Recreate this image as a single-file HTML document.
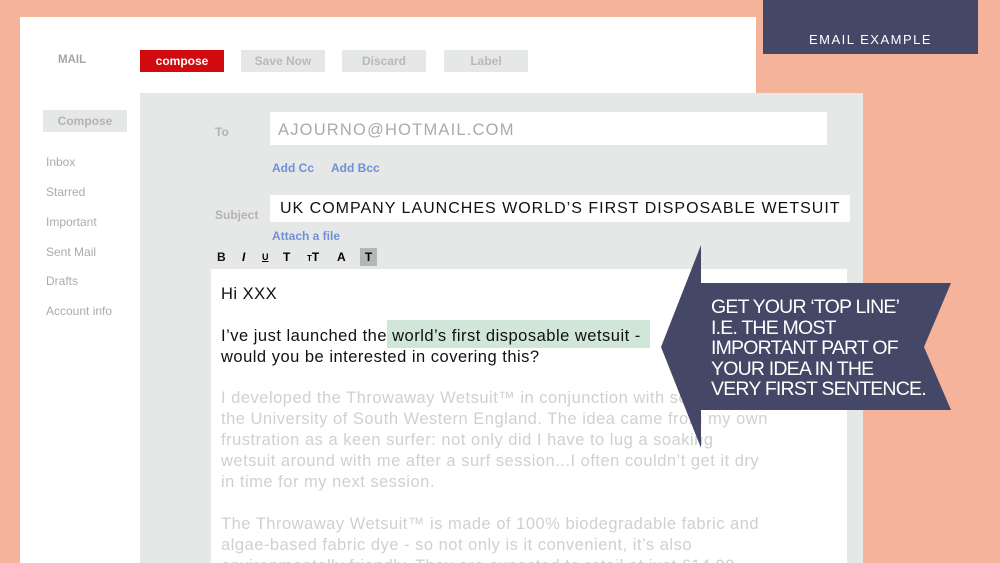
<!DOCTYPE html>
<html><head><style>
*{margin:0;padding:0;box-sizing:border-box}
html,body{width:1000px;height:563px;overflow:hidden}
body{background:#f5b39c;position:relative;font-family:"Liberation Sans",sans-serif}
.a{position:absolute}
.btn{position:absolute;top:50px;height:22px;background:#e6e8e7;color:#b8b8b8;font-weight:bold;font-size:12px;text-align:center;line-height:22px}
.side{position:absolute;left:46px;color:#ababab;font-size:12px}
.lbl{position:absolute;color:#b3b3b3;font-weight:bold;font-size:12px}
.lnk{position:absolute;color:#6f8fd6;font-weight:bold;font-size:12px}
.body{font-size:16.5px;line-height:21px;letter-spacing:0.5px;white-space:nowrap}
</style></head><body>
<div class="a" style="left:20px;top:17px;width:736px;height:546px;background:#fff"></div>
<div class="a" style="left:763px;top:0;width:215px;height:54px;background:#454766;color:#fff;font-size:13px;letter-spacing:1.5px;text-align:center;line-height:80px">EMAIL EXAMPLE</div>
<div class="a" style="left:58px;top:54px;color:#a6a6a6;font-size:11.5px;font-weight:bold">MAIL</div>
<div class="btn" style="left:140px;width:84px;background:#d10a10;color:#fff">compose</div>
<div class="btn" style="left:241px;width:84px">Save Now</div>
<div class="btn" style="left:342px;width:84px">Discard</div>
<div class="btn" style="left:444px;width:84px">Label</div>
<div class="a" style="left:140px;top:93px;width:723px;height:470px;background:#e6e8e7"></div>
<div class="a" style="left:43px;top:110px;width:84px;height:22px;background:#e6e8e7;color:#b3b3b3;font-weight:bold;font-size:12px;text-align:center;line-height:22px">Compose</div>
<div class="side" style="top:155px">Inbox</div>
<div class="side" style="top:185px">Starred</div>
<div class="side" style="top:215px">Important</div>
<div class="side" style="top:245px">Sent Mail</div>
<div class="side" style="top:274px">Drafts</div>
<div class="side" style="top:304px">Account info</div>
<div class="lbl" style="left:215px;top:125px">To</div>
<div class="a" style="left:270px;top:112px;width:557px;height:33px;background:#fff;color:#aaa;font-size:16.5px;letter-spacing:1.2px;padding:9px 0 0 8px">AJOURNO@HOTMAIL.COM</div>
<div class="lnk" style="left:272px;top:161px">Add Cc</div>
<div class="lnk" style="left:331px;top:161px">Add Bcc</div>
<div class="lbl" style="left:215px;top:208px">Subject</div>
<div class="a" style="left:270px;top:195px;width:580px;height:27px;background:#fff;color:#111;font-size:16px;letter-spacing:1px;padding:5px 0 0 10px;white-space:nowrap">UK COMPANY LAUNCHES WORLD’S FIRST DISPOSABLE WETSUIT</div>
<div class="lnk" style="left:272px;top:229px">Attach a file</div>
<div class="a" style="left:217px;top:250px;font-size:12px;font-weight:bold;color:#111">B</div>
<div class="a" style="left:242px;top:250px;font-size:12px;font-weight:bold;font-style:italic">I</div>
<div class="a" style="left:262px;top:252px;font-size:9px;font-weight:bold;text-decoration:underline">U</div>
<div class="a" style="left:283px;top:250px;font-size:12px;font-weight:bold">T</div>
<div class="a" style="left:307px;top:250px;font-size:12px;font-weight:bold"><span style="font-size:8px">T</span>T</div>
<div class="a" style="left:337px;top:250px;font-size:12px;font-weight:bold">A</div>
<div class="a" style="left:360px;top:248px;width:17px;height:18px;background:#b3b7b6;font-size:12px;font-weight:bold;text-align:center;line-height:18px">T</div>
<div class="a" style="left:211px;top:269px;width:636px;height:294px;background:#fff;overflow:hidden">
<div class="a" style="left:176px;top:51px;width:263px;height:28px;background:#cfe6d9"></div>
<div class="a body" style="left:10px;top:15px;color:#111">Hi XXX</div>
<div class="a body" style="left:10px;top:57px;color:#111">I’ve just launched the world’s first disposable wetsuit -<br>would you be interested in covering this?</div>
<div class="a body" style="left:10px;top:119px;color:#d0d0d0">I developed the Throwaway Wetsuit™ in conjunction with scientists at<br>the University of South Western England. The idea came from my own<br>frustration as a keen surfer: not only did I have to lug a soaking<br>wetsuit around with me after a surf session...I often couldn’t get it dry<br>in time for my next session.<br><br>The Throwaway Wetsuit™ is made of 100% biodegradable fabric and<br>algae-based fabric dye - so not only is it convenient, it’s also<br>environmentally friendly. They are expected to retail at just £14.99</div>
</div>
<svg class="a" style="left:0;top:0" width="1000" height="563"><polygon points="701,245 701,283 951,283 924,347 951,410 701,410 701,448 661,347" fill="#454766"/></svg>
<div class="a" style="left:711px;top:297px;color:#fff;font-size:19.5px;line-height:20.5px;white-space:nowrap;letter-spacing:-0.8px">GET YOUR ‘TOP LINE’<br>I.E. THE MOST<br>IMPORTANT PART OF<br>YOUR IDEA IN THE<br>VERY FIRST SENTENCE.</div>
</body></html>
